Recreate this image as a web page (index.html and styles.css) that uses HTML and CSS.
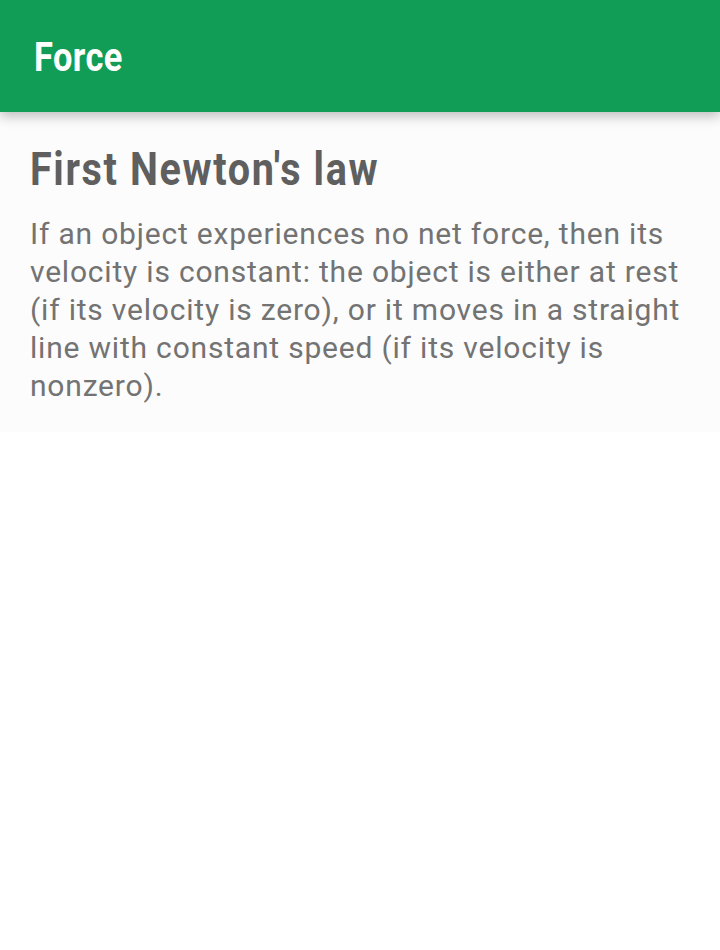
FILE: index.html
```html
<!DOCTYPE html>
<html>
<head>
<meta charset="utf-8">
<link rel="stylesheet" href="styles.css">
</head>
<body>
<header class="appbar">
  <h1 class="appbar-title"><span class="cond">Force</span></h1>
</header>
<main class="card">
  <h2 class="card-title"><span class="cond">First Newton's law</span></h2>
  <p class="card-text">If an object experiences no net force, then its velocity is constant: the object is either at rest (if its velocity is zero), or it moves in a straight line with constant speed (if its velocity is nonzero).</p>
</main>
</body>
</html>
```
FILE: styles.css
```css
html, body {
  margin: 0;
  padding: 0;
  background: #ffffff;
  font-family: Roboto, "Noto Sans", sans-serif;
}
.appbar {
  position: relative;
  z-index: 2;
  height: 112px;
  background: #129d56;
  box-shadow: 0 4px 12px rgba(0, 0, 0, 0.26);
  display: flex;
  align-items: center;
  padding: 0 34px;
}
.appbar-title {
  margin: 4px 0 0 0;
  color: #ffffff;
  font-size: 40px;
  font-weight: 700;
  line-height: 1;
  letter-spacing: 0.5px;
}
.cond {
  display: inline-block;
  transform: scaleX(0.86);
  transform-origin: left center;
  white-space: nowrap;
}
.card {
  background: #fcfcfc;
  padding: 29px 20px 27px 30px;
}
.card-title {
  margin: 0 0 18px 0;
  color: #5f5f5f;
  font-size: 46px;
  font-weight: 700;
  line-height: 56px;
  letter-spacing: 1.9px;
}
.card-text {
  margin: 0;
  color: #737373;
  font-size: 30px;
  line-height: 38px;
  letter-spacing: 0.8px;
}
```
